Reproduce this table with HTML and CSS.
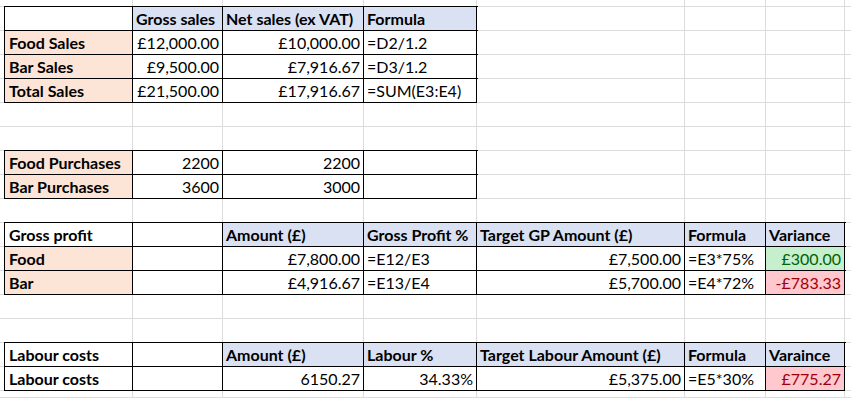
FILE: index.html
```html
<!DOCTYPE html>
<html lang="en">
<head>
<meta charset="utf-8">
<title>Sales sheet</title>
<link rel="stylesheet" href="styles.css">
</head>
<body>
<div class="sheet">
  <div class="row top"><div class="c"></div><div class="c"></div><div class="c"></div><div class="c"></div><div class="c"></div><div class="c"></div><div class="c"></div><div class="c"></div><div class="c"></div></div>

  <div class="row"><div class="c"></div><div class="c b"></div><div class="c b hd">Gross sales</div><div class="c b hd">Net sales (ex VAT)</div><div class="c b hd">Formula</div><div class="c"></div><div class="c"></div><div class="c"></div><div class="c"></div></div>
  <div class="row"><div class="c"></div><div class="c b lb">Food Sales</div><div class="c b r">£12,000.00</div><div class="c b r">£10,000.00</div><div class="c b">=D2/1.2</div><div class="c"></div><div class="c"></div><div class="c"></div><div class="c"></div></div>
  <div class="row"><div class="c"></div><div class="c b lb">Bar Sales</div><div class="c b r">£9,500.00</div><div class="c b r">£7,916.67</div><div class="c b">=D3/1.2</div><div class="c"></div><div class="c"></div><div class="c"></div><div class="c"></div></div>
  <div class="row"><div class="c"></div><div class="c b lb">Total Sales</div><div class="c b r">£21,500.00</div><div class="c b r">£17,916.67</div><div class="c b">=SUM(E3:E4)</div><div class="c"></div><div class="c"></div><div class="c"></div><div class="c"></div></div>

  <div class="row"><div class="c"></div><div class="c"></div><div class="c"></div><div class="c"></div><div class="c"></div><div class="c"></div><div class="c"></div><div class="c"></div><div class="c"></div></div>
  <div class="row"><div class="c"></div><div class="c"></div><div class="c"></div><div class="c"></div><div class="c"></div><div class="c"></div><div class="c"></div><div class="c"></div><div class="c"></div></div>

  <div class="row"><div class="c"></div><div class="c b lb">Food Purchases</div><div class="c b r">2200</div><div class="c b r">2200</div><div class="c b"></div><div class="c"></div><div class="c"></div><div class="c"></div><div class="c"></div></div>
  <div class="row"><div class="c"></div><div class="c b lb">Bar Purchases</div><div class="c b r">3600</div><div class="c b r">3000</div><div class="c b"></div><div class="c"></div><div class="c"></div><div class="c"></div><div class="c"></div></div>

  <div class="row"><div class="c"></div><div class="c"></div><div class="c"></div><div class="c"></div><div class="c"></div><div class="c"></div><div class="c"></div><div class="c"></div><div class="c"></div></div>

  <div class="row"><div class="c"></div><div class="c b bold">Gross profit</div><div class="c b"></div><div class="c b hd">Amount (£)</div><div class="c b hd">Gross Profit %</div><div class="c b hd">Target GP Amount (£)</div><div class="c b hd">Formula</div><div class="c b hd">Variance</div><div class="c"></div></div>
  <div class="row"><div class="c"></div><div class="c b lb">Food</div><div class="c b"></div><div class="c b r">£7,800.00</div><div class="c b">=E12/E3</div><div class="c b r">£7,500.00</div><div class="c b">=E3*75%</div><div class="c b r good">£300.00</div><div class="c"></div></div>
  <div class="row"><div class="c"></div><div class="c b lb">Bar</div><div class="c b"></div><div class="c b r">£4,916.67</div><div class="c b">=E13/E4</div><div class="c b r">£5,700.00</div><div class="c b">=E4*72%</div><div class="c b r bad">-£783.33</div><div class="c"></div></div>

  <div class="row"><div class="c"></div><div class="c"></div><div class="c"></div><div class="c"></div><div class="c"></div><div class="c"></div><div class="c"></div><div class="c"></div><div class="c"></div></div>
  <div class="row"><div class="c"></div><div class="c"></div><div class="c"></div><div class="c"></div><div class="c"></div><div class="c"></div><div class="c"></div><div class="c"></div><div class="c"></div></div>

  <div class="row"><div class="c"></div><div class="c b bold">Labour costs</div><div class="c b"></div><div class="c b hd">Amount (£)</div><div class="c b hd">Labour %</div><div class="c b hd">Target Labour Amount (£)</div><div class="c b hd">Formula</div><div class="c b hd">Varaince</div><div class="c"></div></div>
  <div class="row"><div class="c"></div><div class="c b bold">Labour costs</div><div class="c b"></div><div class="c b r">6150.27</div><div class="c b r">34.33%</div><div class="c b r">£5,375.00</div><div class="c b">=E5*30%</div><div class="c b r bad">£775.27</div><div class="c"></div></div>

  <div class="row last"><div class="c"></div><div class="c"></div><div class="c"></div><div class="c"></div><div class="c"></div><div class="c"></div><div class="c"></div><div class="c"></div><div class="c"></div></div>
</div>
</body>
</html>
```

FILE: styles.css
```css
html, body {
  margin: 0;
  padding: 0;
  background: #ffffff;
}

.sheet {
  display: flex;
  flex-direction: column;
  height: 398px;
  overflow: hidden;
  font-family: Lato, "Liberation Sans", sans-serif;
  font-size: 16px;
  color: #000000;
}

.row {
  display: grid;
  grid-template-columns: 5px 128px 90px 141px 113px 208px 81px 79px 1fr;
  height: 24px;
  flex: none;
}

.row.top {
  height: 7px;
}

.row.last {
  flex: 1;
}

.c {
  box-sizing: border-box;
  background: #ffffff;
  border-right: 1px solid #dcdcdc;
  border-bottom: 1px solid #dcdcdc;
  display: flex;
  align-items: flex-end;
  justify-content: flex-start;
  padding: 0 3px 2px 3px;
  line-height: 1.2;
  white-space: nowrap;
  min-width: 0;
}

.row > .c:nth-child(2) {
  padding-left: 4px;
}

.b {
  border-right-color: #000000;
  border-bottom-color: #000000;
  box-shadow: 0 0 0 1px #000000;
}

.r {
  justify-content: flex-end;
}

.hd {
  background: #d9e1f2;
  font-weight: 700;
}

.lb {
  background: #fce4d6;
  font-weight: 700;
}

.bold {
  font-weight: 700;
}

.good {
  background: #c6efce;
  color: #006100;
}

.bad {
  background: #ffc7ce;
  color: #9c0006;
}
```
